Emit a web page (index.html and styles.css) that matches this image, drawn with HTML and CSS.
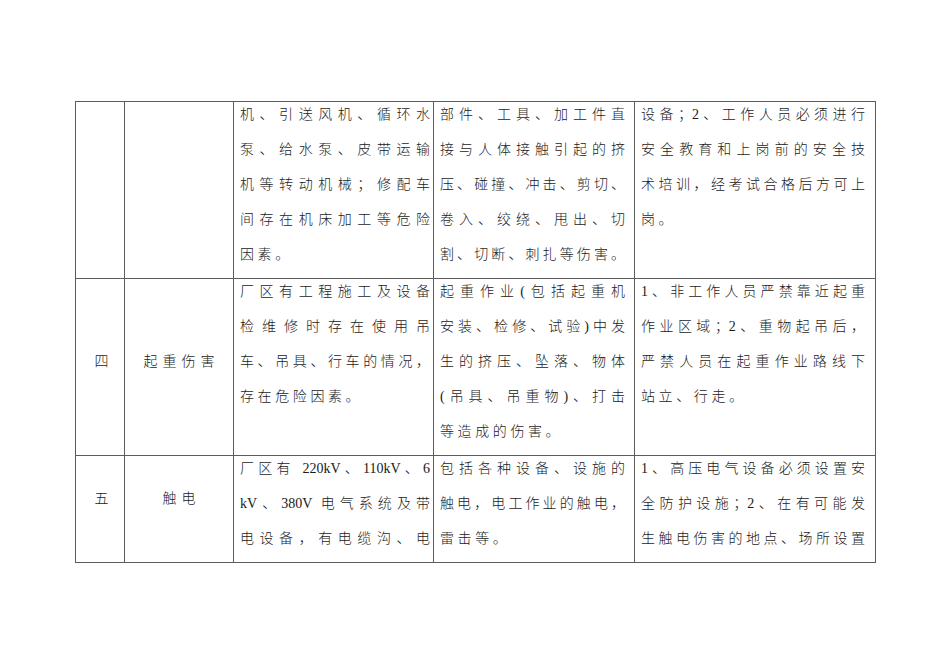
FILE: index.html
```html
<!DOCTYPE html>
<html lang="zh-CN">
<head>
<meta charset="utf-8">
<title>危险因素表</title>
<link rel="stylesheet" href="styles.css">
</head>
<body>
<div class="page">
  <div class="table">
    <!-- row 1 -->
    <div class="cell num"></div>
    <div class="cell type"></div>
    <div class="cell c3">
      <p class="ln">机、引送风机、循环水</p>
      <p class="ln">泵、给水泵、皮带运输</p>
      <p class="ln">机等转动机械；修配车</p>
      <p class="ln">间存在机床加工等危险</p>
      <p class="ln end">因素。</p>
    </div>
    <div class="cell c4">
      <p class="ln">部件、工具、加工件直</p>
      <p class="ln">接与人体接触引起的挤</p>
      <p class="ln">压、碰撞、冲击、剪切、</p>
      <p class="ln">卷入、绞绕、甩出、切</p>
      <p class="ln">割、切断、刺扎等伤害。</p>
    </div>
    <div class="cell c5">
      <p class="ln">设备；2、工作人员必须进行</p>
      <p class="ln">安全教育和上岗前的安全技</p>
      <p class="ln">术培训，经考试合格后方可上</p>
      <p class="ln end">岗。</p>
    </div>

    <!-- row 2 -->
    <div class="cell num mid r2"><p class="lbl">四</p></div>
    <div class="cell type mid r2"><p class="lbl">起重伤害</p></div>
    <div class="cell c3">
      <p class="ln">厂区有工程施工及设备</p>
      <p class="ln">检维修时存在使用吊</p>
      <p class="ln">车、吊具、行车的情况，</p>
      <p class="ln end">存在危险因素。</p>
    </div>
    <div class="cell c4">
      <p class="ln">起重作业(包括起重机</p>
      <p class="ln">安装、检修、试验)中发</p>
      <p class="ln">生的挤压、坠落、物体</p>
      <p class="ln">(吊具、吊重物)、打击</p>
      <p class="ln end">等造成的伤害。</p>
    </div>
    <div class="cell c5">
      <p class="ln">1、非工作人员严禁靠近起重</p>
      <p class="ln">作业区域；2、重物起吊后，</p>
      <p class="ln">严禁人员在起重作业路线下</p>
      <p class="ln end">站立、行走。</p>
    </div>

    <!-- row 3 -->
    <div class="cell num mid r3"><p class="lbl">五</p></div>
    <div class="cell type mid r3"><p class="lbl">触电</p></div>
    <div class="cell c3">
      <p class="ln">厂区有 220kV、110kV、6</p>
      <p class="ln">kV、380V 电气系统及带</p>
      <p class="ln">电设备，有电缆沟、电</p>
    </div>
    <div class="cell c4">
      <p class="ln">包括各种设备、设施的</p>
      <p class="ln">触电，电工作业的触电，</p>
      <p class="ln end">雷击等。</p>
    </div>
    <div class="cell c5">
      <p class="ln">1、高压电气设备必须设置安</p>
      <p class="ln">全防护设施；2、在有可能发</p>
      <p class="ln">生触电伤害的地点、场所设置</p>
    </div>
  </div>
</div>
</body>
</html>
```

FILE: styles.css
```css
* {
  box-sizing: border-box;
}

html, body {
  margin: 0;
  padding: 0;
  background: #ffffff;
}

body {
  font-family: "Liberation Serif", "Noto Sans CJK SC", serif;
  font-size: 14px;
  font-weight: 300;
  color: #1a1a1a;
}

.page {
  padding: 101px 0 0 75px;
  height: 672px;
}

.table {
  display: inline-grid;
  grid-template-columns: 49px 109px 200px 201px 241px;
  border-top: 1px solid #5c5c5c;
  border-left: 1px solid #5c5c5c;
}

.cell {
  border-right: 1px solid #5c5c5c;
  border-bottom: 1px solid #5c5c5c;
  padding: 0 0 6px 6px;
}

.cell.c3 {
  padding-right: 3px;
}

.cell.c4 {
  padding-right: 9px;
}

.cell.c5 {
  padding-right: 10px;
}

.ln {
  margin: 0;
  line-height: 35px;
  text-align: justify;
  text-align-last: justify;
  letter-spacing: 0;
}

.ln:first-child {
  margin-top: -5px;
}

.ln.end {
  text-align-last: left;
  letter-spacing: 3.6px;
}

.cell.mid {
  display: flex;
  align-items: center;
  justify-content: center;
  padding-top: 0;
  padding-right: 0;
}

.cell.num {
  padding-left: 8px;
}

.cell.type {
  padding-left: 5px;
}

.cell.mid.r2 {
  padding-bottom: 12px;
}

.cell.mid.r3 {
  padding-bottom: 22px;
}

.lbl {
  margin: 0;
  line-height: 35px;
  letter-spacing: 5px;
  white-space: nowrap;
}
```
